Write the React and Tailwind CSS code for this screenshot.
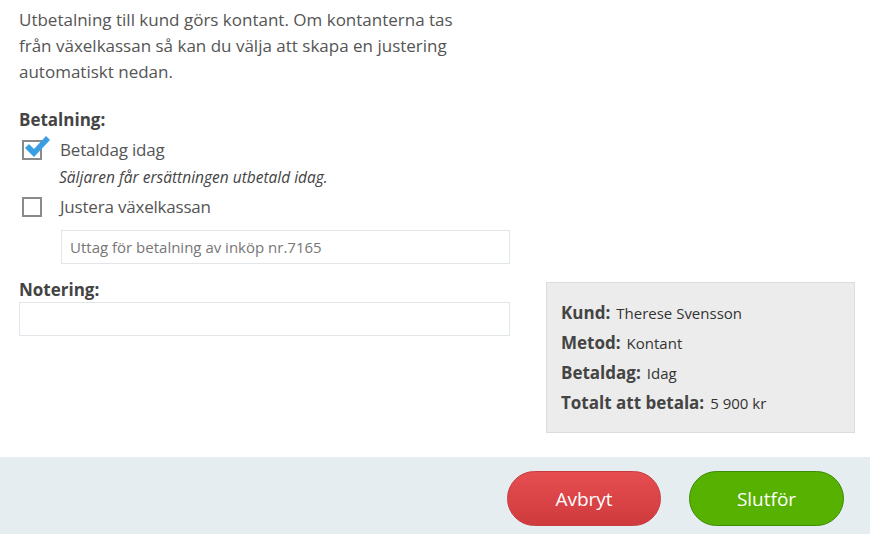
const font = { fontFamily: '"Open Sans", "Noto Sans", sans-serif' };

function Checkbox({ checked }) {
  return (
    <div className="relative w-[20px] h-[20px] border-2 border-[#8a8a8a] bg-white shrink-0">
      {checked && (
        <svg
          className="absolute -left-[1px] -top-[8px]"
          width="28"
          height="26"
          viewBox="0 0 28 26"
        >
          <path
            d="M2 14 L6 10 L11 15 L23 2 L27 6 L11 23 Z"
            fill="#3a9ee2"
          />
        </svg>
      )}
    </div>
  );
}

const summary = [
  ["Kund:", "Therese Svensson"],
  ["Metod:", "Kontant"],
  ["Betaldag:", "Idag"],
  ["Totalt att betala:", "5 900 kr"],
];

export default function App() {
  return (
    <div className="w-[870px] h-[534px] bg-white flex flex-col text-[#555]" style={font}>
      <div className="flex-1 pl-[19px] pt-[7px]">
        <p className="text-[17px] leading-[26px] w-[462px]">
          Utbetalning till kund görs kontant. Om kontanterna tas från växelkassan så kan du välja att skapa en justering automatiskt nedan.
        </p>
        <div className="flex gap-[36px] mt-[21px]">
          <div className="w-[491px] shrink-0">
            <div className="text-[17px] font-bold text-[#444] leading-[22px] mt-[3px]">Betalning:</div>
            <div className="flex items-center gap-[18px] mt-[6px] pl-[3px]">
              <Checkbox checked />
              <span className="text-[17px] tracking-[-0.2px]">Betaldag idag</span>
            </div>
            <div className="pl-[40px] mt-[3px] text-[15.5px] italic text-[#444]">
              Säljaren får ersättningen utbetald idag.
            </div>
            <div className="flex items-center gap-[18px] mt-[5px] pl-[3px]">
              <Checkbox />
              <span className="text-[17px] tracking-[-0.2px]">Justera växelkassan</span>
            </div>
            <div className="ml-[42px] mt-[11px] h-[34px] border border-[#e1e6ea] flex items-center px-[8px] text-[15px] text-[#777]">
              Uttag för betalning av inköp nr.7165
            </div>
            <div className="text-[17px] font-bold text-[#444] mt-[15px] leading-[22px]">Notering:</div>
            <div className="mt-[1px] h-[34px] border border-[#e1e6ea]" />
          </div>
          <div className="mt-[176px] w-[309px] shrink-0 h-[151px] bg-[#ececec] border border-[#dcdcdc] px-[14px] pt-[19px] flex flex-col gap-[8px]">
            {summary.map(([k, v]) => (
              <div key={k} className="flex items-baseline gap-[6px] leading-[22px]">
                <span className="text-[17px] font-bold text-[#444]">{k}</span>
                <span className="text-[15px] text-[#333]">{v}</span>
              </div>
            ))}
          </div>
        </div>
      </div>
      <div className="h-[77px] bg-[#e6edf1] flex items-start justify-end gap-[28px] pr-[26px] pt-[14px]">
        <button className="w-[154px] h-[55px] rounded-full bg-gradient-to-b from-[#e64e50] to-[#cf3a3d] border border-[#c73c3e] text-white text-[19px] pt-[2px]">
          Avbryt
        </button>
        <button className="w-[155px] h-[55px] rounded-full bg-[#56b100] border border-[#3d8c0a] text-white text-[19px] pt-[2px]">
          Slutför
        </button>
      </div>
    </div>
  );
}
